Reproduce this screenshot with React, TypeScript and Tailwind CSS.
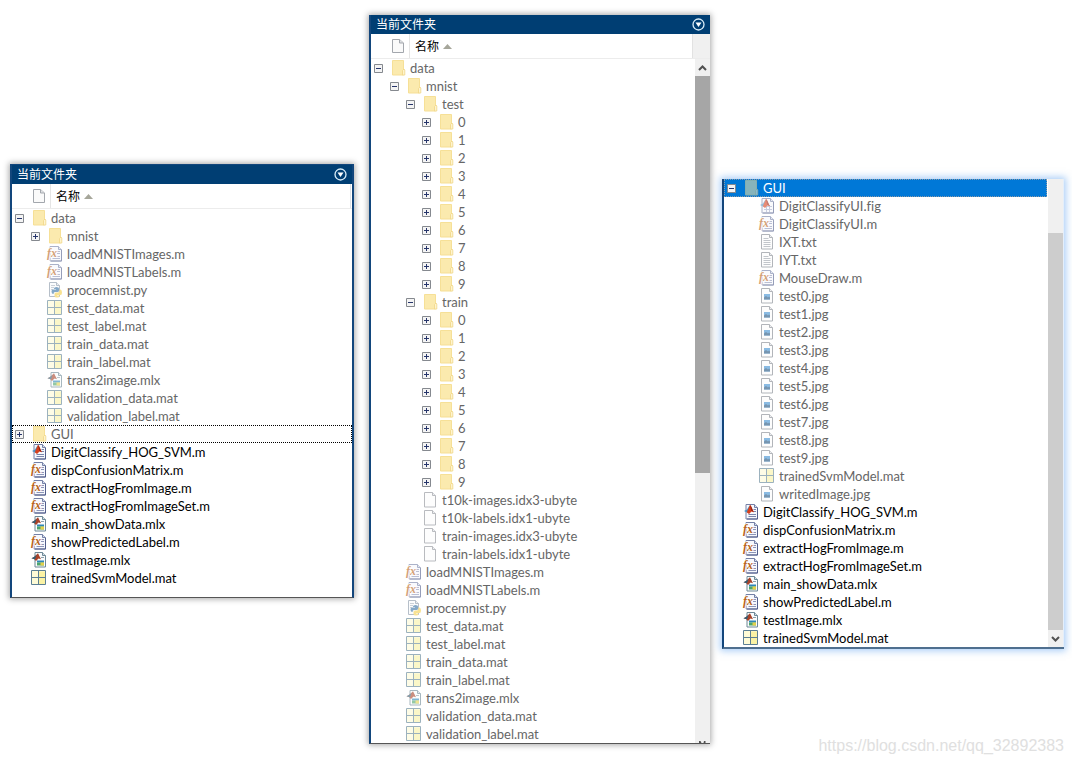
import type { ReactNode } from "react";

type Kind =
  | "folder" | "fn" | "script" | "live" | "mat" | "py" | "blank" | "txt" | "jpg" | "fig";

type Item = {
  name: string;
  kind: Kind;
  level: number;
  state?: "open" | "closed";
  dim?: boolean;
  selected?: boolean;
  focused?: boolean;
};

const folder = (name: string, level: number, state: "open" | "closed"): Item => ({
  name, kind: "folder", level, state, dim: true,
});
const file = (name: string, kind: Kind, level: number, dim = true): Item => ({
  name, kind, level, dim,
});

const dataFiles: Item[] = [
  file("loadMNISTImages.m", "fn", 1),
  file("loadMNISTLabels.m", "fn", 1),
  file("procemnist.py", "py", 1),
  file("test_data.mat", "mat", 1),
  file("test_label.mat", "mat", 1),
  file("train_data.mat", "mat", 1),
  file("train_label.mat", "mat", 1),
  file("trans2image.mlx", "live", 1),
  file("validation_data.mat", "mat", 1),
  file("validation_label.mat", "mat", 1),
];

const rootFiles: Item[] = [
  file("DigitClassify_HOG_SVM.m", "script", 0, false),
  file("dispConfusionMatrix.m", "fn", 0, false),
  file("extractHogFromImage.m", "fn", 0, false),
  file("extractHogFromImageSet.m", "fn", 0, false),
  file("main_showData.mlx", "live", 0, false),
  file("showPredictedLabel.m", "fn", 0, false),
  file("testImage.mlx", "live", 0, false),
  file("trainedSvmModel.mat", "mat", 0, false),
];

const digits = ["0", "1", "2", "3", "4", "5", "6", "7", "8", "9"];

const overview: Item[] = [
  folder("data", 0, "open"),
  folder("mnist", 1, "closed"),
  ...dataFiles,
  { ...folder("GUI", 0, "closed"), focused: true },
  ...rootFiles,
];

const dataTree: Item[] = [
  folder("data", 0, "open"),
  folder("mnist", 1, "open"),
  folder("test", 2, "open"),
  ...digits.map((d) => folder(d, 3, "closed")),
  folder("train", 2, "open"),
  ...digits.map((d) => folder(d, 3, "closed")),
  file("t10k-images.idx3-ubyte", "blank", 2),
  file("t10k-labels.idx1-ubyte", "blank", 2),
  file("train-images.idx3-ubyte", "blank", 2),
  file("train-labels.idx1-ubyte", "blank", 2),
  ...dataFiles,
];

const guiTree: Item[] = [
  { ...folder("GUI", 0, "open"), selected: true },
  file("DigitClassifyUI.fig", "fig", 1),
  file("DigitClassifyUI.m", "fn", 1),
  file("IXT.txt", "txt", 1),
  file("IYT.txt", "txt", 1),
  file("MouseDraw.m", "fn", 1),
  ...digits.map((d) => file(`test${d}.jpg`, "jpg", 1)),
  file("trainedSvmModel.mat", "mat", 1),
  file("writedImage.jpg", "jpg", 1),
  ...rootFiles,
];

const indents = ["pl-[3px]", "pl-[19px]", "pl-[35px]", "pl-[51px]"];

function Page({ stroke = "#7480a6" }: { stroke?: string }) {
  return (
    <>
      <path d="M3 .5h8.500l3 3v11.500H3z" fill="#f6f8fd" stroke={stroke} />
      <path d="M11.500 .5v3h3" fill="#d5dbec" stroke={stroke} />
      <path d="M14.500 4v11H4" fill="none" stroke="#525e8c" />
    </>
  );
}

function Logo() {
  return (
    <>
      <path d="M1 7 4 5.500 6.500 1.500 7.200 4 5 9z" fill="#4b93c4" />
      <path d="M3.800 8.300 7 .8c1.600 1.400 2.300 4.800 4 7.500L8.500 7.500 6 10z" fill="#d8401c" />
      <path d="M7 .8c1.600 1.400 2.300 4.800 4 7.500L8.200 6.800z" fill="#9c2413" />
    </>
  );
}

function FileIcon({ kind, dim }: { kind: Kind; dim?: boolean }) {
  const art: Record<Kind, ReactNode> = {
    folder: (
      <>
        <path d="M2.500.5h11v14.500h-11z" fill="#fbe8a6" stroke="#f6dd8c" />
        <path d="M12.500 15v-4.500l1.500-1.500.8 1v5z" fill="#fff3c8" stroke="#efd27a" strokeWidth=".8" />
      </>
    ),
    fn: (
      <>
        <Page />
        <path d="M10 5.500h3M10 7.500h3M5.500 10.500h7.500M5.500 12.500h7.500" stroke="#8d96b8" />
        <text x="0" y="11" fontSize="12" fontWeight="700" fontStyle="italic" fontFamily="Liberation Serif, serif" fill="#b8651c" stroke="#fff" strokeWidth="1.500" paintOrder="stroke">fx</text>
      </>
    ),
    script: (
      <>
        <Page />
        <path d="M10.500 5.500H13M10.500 7.500H13M5.500 10.500H13M5.500 12.500H13" stroke="#7b86ac" />
        <Logo />
      </>
    ),
    fig: (
      <>
        <Page />
        <path d="M5 8.500h8M5 11.500h8M7.500 7v7M10.500 7v7" stroke="#a5adca" />
        <Logo />
      </>
    ),
    live: (
      <>
        <path d="M4 .5h7.500l3 3v11.500H4z" fill="#fafcfd" stroke="#6d8896" />
        <path d="M11.500 .5v3h3" fill="#d5dfe4" stroke="#6d8896" />
        <path d="M10 5.500h3" stroke="#8fa0aa" />
        <path d="M6 8.500h7v2H6z" fill="#2f86b8" />
        <path d="M6 10.500h7v3H6z" fill="#4ea56a" />
        <path d="M9.500 10.500h3.500V13.500h-3.500z" fill="#e3cf4a" />
        <path d="M.5 6.200 3 5l4-3.800 3 6L7.500 6.500 5 9 3 7z" fill="#a8432a" />
        <path d="M.5 6.200 3 5l2.500-2L4 7.200 3 7z" fill="#2c5f78" />
      </>
    ),
    mat: (
      <>
        <path d="M.5 1h14v14H.5z" fill="#fefbd6" />
        <path d="M8 8h6v6.500H8zM8 1.500h6V7H8z" fill="#faf2a4" />
        <path d="M.5 .5h14v14H.5zM7.500 .5v14M.5 7.500h14" fill="none" stroke="#5c7f94" />
      </>
    ),
    py: (
      <>
        <path d="M2.500.5h7l3 3v11h-10z" fill="#fafbfc" stroke="#8795a6" />
        <path d="M9.500.5v3h3" fill="#dfe4ea" stroke="#8795a6" />
        <path d="M4 3.500h4M4 5.500h3M4 7.500h2" stroke="#a9b3bf" />
        <path d="M7 6.500q0-1.500 2.500-1.500T12 6.500v2q0 1.500-1.500 1.500H8q-1.500 0-1.500 2H6q-1.500-.5-1.500-2.500T6 7.500h3V7H7z" fill="#3470a3" />
        <path d="M12.500 7.500h1Q15 8 15 10.500T13.500 13H10v.5h2.500v.5q0 1.500-2.500 1.500T7.500 14v-2q0-1.500 1.500-1.500h2q1.500 0 1.500-2z" fill="#f5d04a" />
      </>
    ),
    blank: (
      <>
        <path d="M2.500.5h8l3 3v11.500h-11z" fill="#fdfdfd" stroke="#8b8f96" />
        <path d="M10.500.5v3h3" fill="#e4e6e9" stroke="#8b8f96" />
      </>
    ),
    txt: (
      <>
        <path d="M2.500.5h8l3 3v11.500h-11z" fill="#fdfdfd" stroke="#7f858d" />
        <path d="M10.500.5v3h3" fill="#e4e6e9" stroke="#7f858d" />
        <path d="M4.500 4.500h5M4.500 6.500h7M4.500 8.500h7M4.500 10.500h7M4.500 12.500h7" stroke="#9aa1aa" />
      </>
    ),
    jpg: (
      <>
        <path d="M2.500.5h8l3 3v11.500h-11z" fill="#fdfdfd" stroke="#7f858d" />
        <path d="M10.500.5v3h3" fill="#e4e6e9" stroke="#7f858d" />
        <path d="M5 6h6v5.500H5z" fill="#3d8fd1" />
        <path d="M5 11.500V9.500l2-1.500 2 1.500 1-1 1 1v2z" fill="#1c4f7c" />
      </>
    ),
  };
  const fade = !dim ? "" : kind === "folder" ? "opacity-90" : "opacity-60";
  return (
    <svg viewBox="0 0 16 16" aria-hidden="true" className={`size-4 shrink-0 overflow-visible ${fade}`}>
      {art[kind]}
    </svg>
  );
}

function Expander({ state, name }: { state: "open" | "closed"; name: string }) {
  return (
    <button type="button" aria-label={name} aria-expanded={state === "open"} className="block size-[9px]">
      <svg viewBox="0 0 9 9" aria-hidden="true" className="size-[9px]">
        <path d="M.5.5h8v8h-8z" fill="#f4f4f4" stroke="#85898f" />
        <path d={state === "open" ? "M2 4.500h5" : "M2 4.500h5M4.500 2v5"} stroke="#26356b" />
      </svg>
    </button>
  );
}

function Row({ item }: { item: Item }) {
  const look = item.selected
    ? "bg-[#0078d7] text-white outline-1 -outline-offset-1 outline-dotted outline-[#8a9aa8]"
    : item.dim
      ? "text-[#666666]"
      : "text-black";
  const focus = item.focused ? "outline-1 -outline-offset-1 outline-dotted outline-black" : "";
  return (
    <li
      role="treeitem"
      aria-level={item.level + 1}
      aria-selected={!!item.selected}
      className={`flex h-[18px] items-center whitespace-nowrap font-['Lato',sans-serif] text-[13px] leading-[18px] [font-variant-ligatures:none] ${indents[item.level]} ${look} ${focus}`}
    >
      <span className="mr-[7px] w-[9px] shrink-0">
        {item.state && <Expander state={item.state} name={item.name} />}
      </span>
      <span className={item.selected ? "opacity-60" : ""}>
        <FileIcon kind={item.kind} dim={item.dim} />
      </span>
      <span className="ml-1">{item.name}</span>
    </li>
  );
}

function Tree({ items, label }: { items: Item[]; label: string }) {
  return (
    <ul role="tree" aria-label={label} className="min-w-0 flex-1">
      {items.map((item, i) => (
        <Row key={i} item={item} />
      ))}
    </ul>
  );
}

function TitleBar() {
  return (
    <header className="flex h-[19px] items-center justify-between bg-[#003e73] px-[5px] text-white">
      <h2 className="text-[12px] leading-[18px]">当前文件夹</h2>
      <button type="button" aria-label="菜单" className="block size-[13px]">
        <svg viewBox="0 0 13 13" aria-hidden="true" className="size-[13px]">
          <circle cx="6.500" cy="6.500" r="5.500" fill="none" stroke="#d8ecf8" strokeWidth="1.300" />
          <path d="M3.500 4.500h6l-3 4.500z" fill="#fff" />
        </svg>
      </button>
    </header>
  );
}

function ColumnHeader({ wide }: { wide?: boolean }) {
  return (
    <div className="flex h-[25px] border-b border-[#ececec]">
      <div className="flex w-[39px] items-center justify-end border-r border-[#e5e5e5] pr-[4px]">
        <svg viewBox="0 0 16 16" aria-hidden="true" className="size-4">
          <path d="M3.500 1.500h7l4 3.500v9.500h-11z" fill="#fafafa" stroke="#a3a7ad" />
          <path d="M10.500 1.500V5h4" fill="#e0e2e5" stroke="#a3a7ad" />
        </svg>
      </div>
      <button type="button" className="flex flex-1 items-center gap-1 pt-px pl-[5px] text-[12px] leading-[18px] text-black">
        名称
        <svg viewBox="0 0 9 5" aria-hidden="true" className="h-[5px] w-[9px]">
          <path d="M0 5 4.500 0 9 5z" fill="#a6a69a" />
        </svg>
      </button>
      {wide ? (
        <span className="w-[18px] border-l border-[#e2e2e2] bg-[#f0f0f0]" />
      ) : (
        <span className="w-[2px] border-l border-[#dfe3e8]" />
      )}
    </div>
  );
}

function Arrow({ down }: { down?: boolean }) {
  return (
    <button type="button" aria-label={down ? "向下滚动" : "向上滚动"} className="flex h-[17px] w-full shrink-0 items-center justify-center">
      <svg viewBox="0 0 9 6" aria-hidden="true" className="h-[6px] w-[9px]">
        <path d={down ? "M1 1l3.500 3.500L8 1" : "M1 5l3.500-3.500L8 5"} fill="none" stroke="#505050" strokeWidth="2" />
      </svg>
    </button>
  );
}

export default function App() {
  return (
    <main className="grid min-h-screen grid-cols-[344fr_356fr_354fr] items-start bg-white pr-2 pb-5 pl-[10px] font-['Open_Sans','Noto_Sans_CJK_SC',sans-serif]">
      <section className="mt-[164px] border-x-2 border-b border-x-[#12467c] border-b-[#555] bg-white pb-[10px] shadow-[0_0_6px_1px_rgba(0,0,0,0.35)]">
        <div className="border-t border-[#12467c]">
          <TitleBar />
        </div>
        <ColumnHeader />
        <Tree items={overview} label="当前文件夹" />
      </section>

      <section className="mt-[15px] ml-[15px] border-b border-l-2 border-b-[#555] border-l-[#12467c] bg-white shadow-[0_0_6px_1px_rgba(0,0,0,0.35)]">
        <TitleBar />
        <ColumnHeader wide />
        <div className="flex">
          <Tree items={dataTree} label="data" />
          <div className="flex w-[15px] flex-col bg-[#f0f0f0]">
            <Arrow />
            <div className="flex-[397] bg-[#a6a6a6]" />
            <div className="flex-[268]" />
            <svg viewBox="0 0 15 2" aria-hidden="true" className="h-[2px] w-[15px]">
              <path d="M4 0h1.500l1 2H4zM9 0h1.500v2H8.500z" fill="#505050" />
            </svg>
          </div>
        </div>
      </section>

      <div className="mt-[179px] ml-[12px]">
        <section className="flex border-b-2 border-l-2 border-b-[#4f6f8f] border-l-[#12467c] bg-white shadow-[0_0_7px_2px_rgba(90,160,240,0.5)]">
          <Tree items={guiTree} label="GUI" />
          <div className="ml-px flex w-4 flex-col border-r border-[#e4eefa] bg-[#f0f0f0]">
            <div className="flex-[54]" />
            <div className="flex-[397] bg-[#cdcdcd]" />
            <Arrow down />
          </div>
        </section>
        <p className="mt-[86px] text-right font-['Liberation_Sans',sans-serif] text-[16px] leading-[22px] text-[#e0e0e0]">
          https://blog.csdn.net/qq_32892383
        </p>
      </div>
    </main>
  );
}
